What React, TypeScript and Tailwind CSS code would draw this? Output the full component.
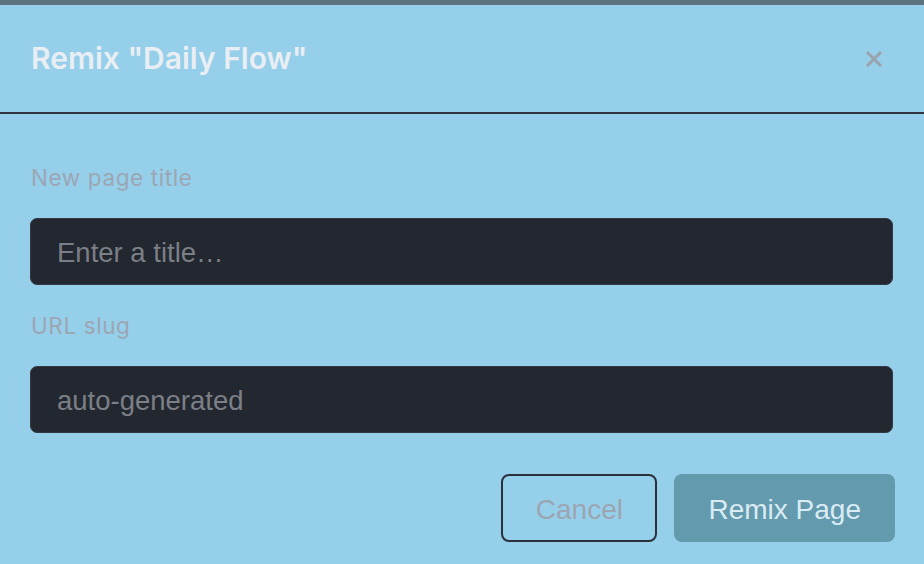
import React from "react";

export default function App() {
  return (
    <div className="w-[924px] h-[564px] overflow-hidden bg-[#96cfea] flex flex-col">
      <div className="h-[5px] bg-[#5c737f] shrink-0" />
      <div className="h-[107px] shrink-0 flex items-center justify-between pl-[31px] pr-[40px] border-b-2 border-[#2e333d] box-content">
        <h2 className="text-[#e9eef4] text-[30px] font-semibold" style={{ fontFamily: "Inter, 'Noto Sans', sans-serif" }}>
          Remix "Daily Flow"
        </h2>
        <button className="text-[#9aa2ad] w-[20px] h-[20px] flex items-center justify-center" aria-label="Close">
          <svg width="18" height="18" viewBox="0 0 18 18" fill="none" stroke="currentColor" strokeWidth="3" strokeLinecap="butt">
            <path d="M2 2 L16 16 M16 2 L2 16" />
          </svg>
        </button>
      </div>
      <div className="flex flex-col pl-[30px] pr-[31px] pt-[52px]" style={{ fontFamily: "Inter, 'Noto Sans', sans-serif" }}>
        <label className="text-[22.5px] leading-[24px] tracking-[0.6px] text-[#9ca6b4] pl-px">New page title</label>
        <input
          className="mt-[28px] h-[67px] rounded-[7px] bg-[#23272f] border border-[#343a45] px-[26px] pt-[2px] text-[27.5px] text-[#c8ccd2] placeholder:text-[#7b7f86] outline-none"
          style={{ fontFamily: "'Liberation Sans', Arial, sans-serif" }}
          placeholder="Enter a title…"
        />
        <label className="mt-[29px] text-[22.5px] leading-[24px] tracking-[0.6px] text-[#9ca6b4] pl-px">URL slug</label>
        <input
          className="mt-[28px] h-[67px] rounded-[7px] bg-[#23272f] border border-[#343a45] px-[26px] pt-[2px] text-[27.5px] text-[#c8ccd2] placeholder:text-[#7b7f86] outline-none"
          style={{ fontFamily: "'Liberation Sans', Arial, sans-serif" }}
          placeholder="auto-generated"
        />
        <div className="mt-[41px] -mr-[2px] flex justify-end gap-[17px]" style={{ fontFamily: "'Liberation Sans', Arial, sans-serif" }}>
          <button className="h-[68px] px-[32.5px] pt-[3px] rounded-[8px] border-2 border-[#2b313c] text-[28px] text-[#9ca5b2]">
            Cancel
          </button>
          <button className="h-[68px] px-[34px] pt-[3px] rounded-[8px] bg-[#639aae] text-[28px] text-[#d9ecf4]">
            Remix Page
          </button>
        </div>
      </div>
    </div>
  );
}
